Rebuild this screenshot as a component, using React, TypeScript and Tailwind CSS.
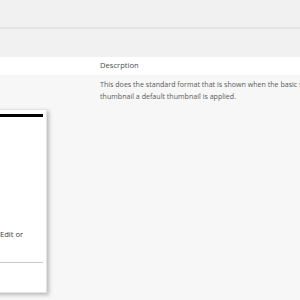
const App = () => {
  return (
    <div className="relative w-[300px] h-[300px] overflow-hidden bg-[#f7f7f7] font-['Open_Sans',sans-serif]">
      <div className="h-[27px] bg-[#f1f1f1]" />
      <div className="h-[2px] bg-[#e4e4e4]" />
      <div className="h-[28px] bg-[#f1f1f1]" />
      <div className="flex h-[18px] items-center bg-white">
        <div className="w-[100px]" />
        <span className="text-[7.6px] text-[#4d4d4d]">Descrption</span>
      </div>
      <div className="flex pt-[4px]">
        <div className="w-[100px] shrink-0" />
        <p className="w-[400px] shrink-0 text-[7.1px] leading-[11.5px] text-[#5a5a5a]">
          This does the standard format that is shown when the basic shortcode is used. If there is no
          <br />
          thumbnail a default thumbnail is applied.
        </p>
      </div>

      {/* popover card over the table */}
      <div className="absolute left-[-100px] top-[109px] w-[147px] h-[184px] bg-white border border-[#e2e2e2] shadow-[2px_2px_4px_rgba(0,0,0,0.25)]">
        <div className="mt-[4px] ml-[4px] mr-[3px] h-[3px] bg-black" />
        <div className="mt-[112px] ml-[99px] text-[7.6px] text-[#3d3d3d] whitespace-nowrap">Edit or</div>
        <div className="mt-[22px] ml-[4px] mr-[3px] h-[1px] bg-[#c8c8c8]" />
      </div>
    </div>
  );
};

export default App;
